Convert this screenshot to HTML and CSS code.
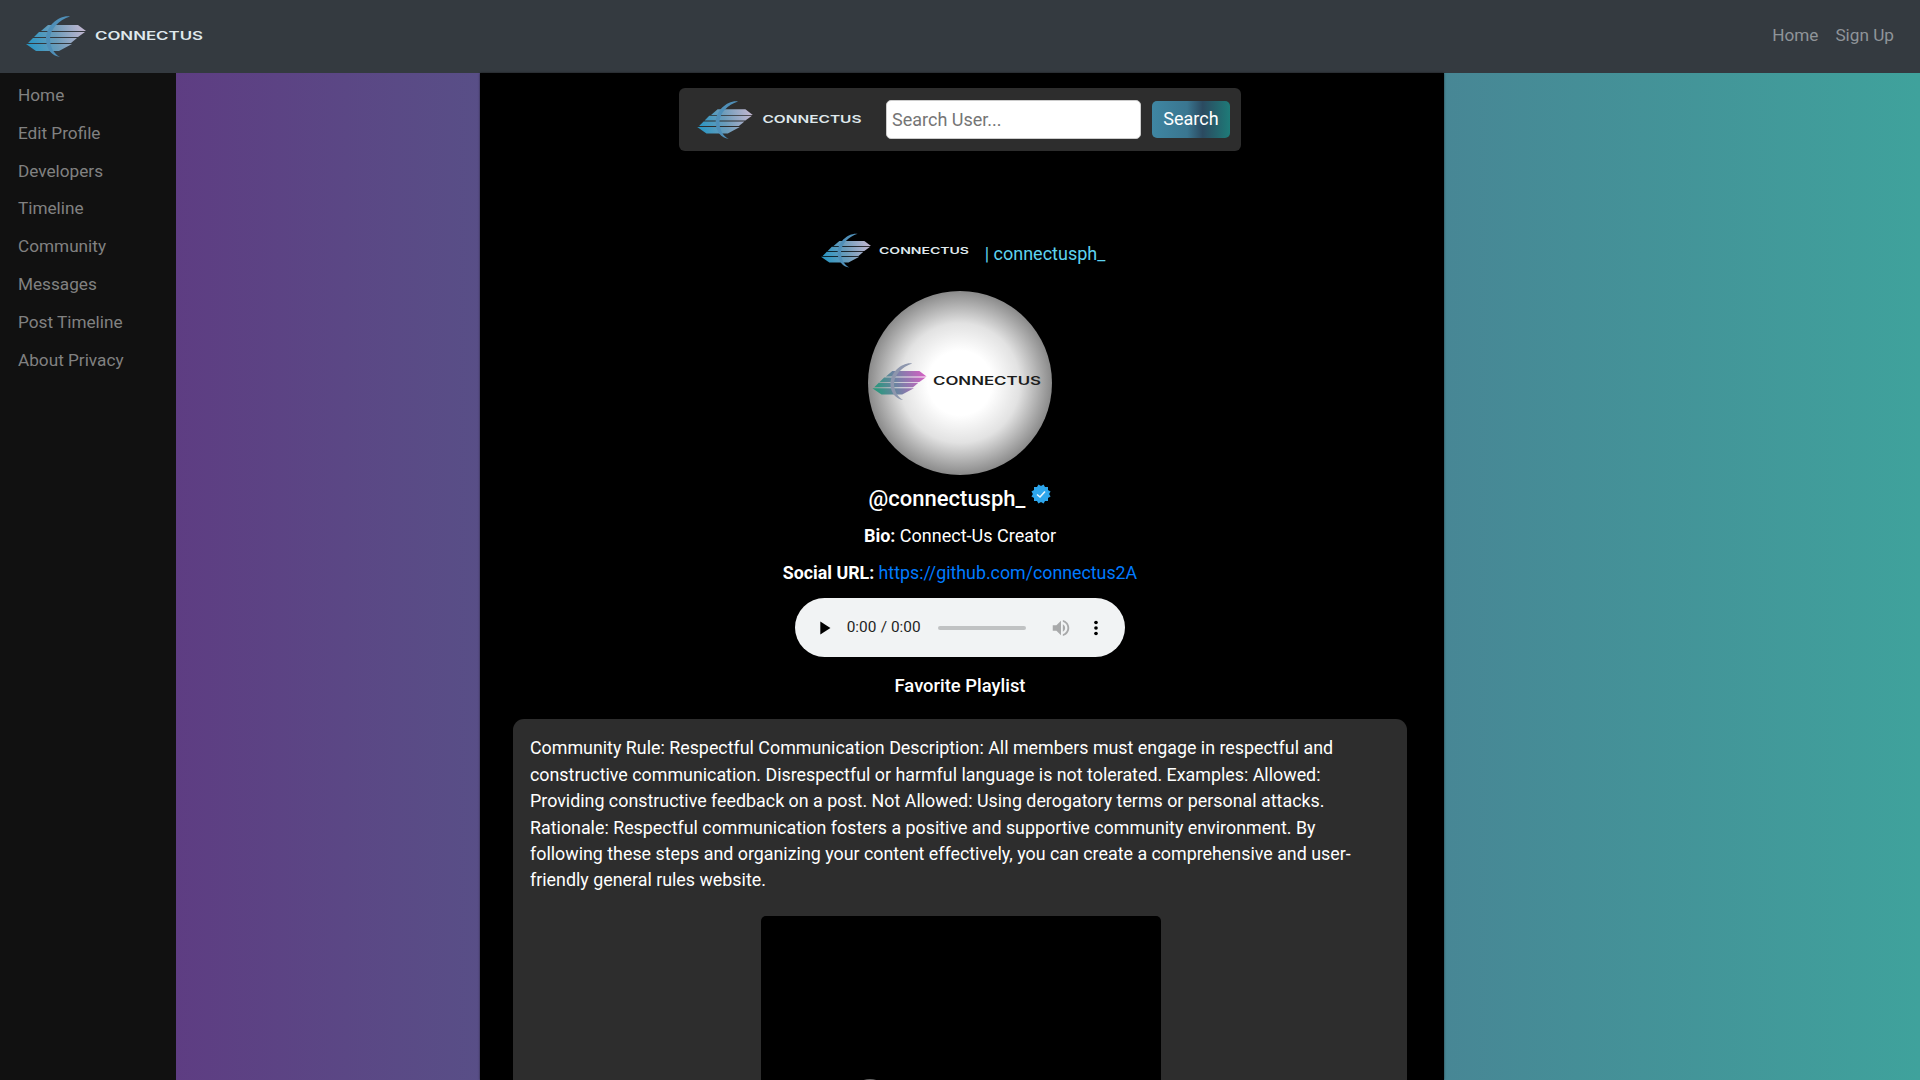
FILE: index.html
```html
<!DOCTYPE html>
<html lang="en">
<head>
  <meta charset="UTF-8" />
  <meta name="viewport" content="width=device-width, initial-scale=1.0"/>
  <title>Connectus - Profile</title>
  <link rel="stylesheet" href="styles.css">
</head>
<body>
  <svg class="defs" width="0" height="0">
    <defs>
      <linearGradient id="blue-fade" gradientUnits="userSpaceOnUse" x1="0" y1="28" x2="60" y2="14">
        <stop offset="0" stop-color="#2596c4"/>
        <stop offset="0.5" stop-color="#6c9cba"/>
        <stop offset="1" stop-color="#c6b8d2"/>
      </linearGradient>
      <linearGradient id="purple-fade" gradientUnits="userSpaceOnUse" x1="0" y1="28" x2="60" y2="14">
        <stop offset="0" stop-color="#1f9a78"/>
        <stop offset="0.5" stop-color="#7a7fa8"/>
        <stop offset="1" stop-color="#d75fc4"/>
      </linearGradient>
      <symbol id="mark" viewBox="0 0 60 41">
        <path d="M22 9H52L60 15H15Z"/>
        <path d="M13 16H59L52 21H8Z"/>
        <path d="M7 22H51L45 27H2Z"/>
        <path d="M0 28H46L33 35H10Z"/>
      </symbol>
      <symbol id="ring" viewBox="0 0 60 41">
        <path d="M44 0.500C33 -1 20 10 20 23C20 33 26 40 34 41C28 38 24 31 24 23C24 13 33 4 44 0.500Z"/>
      </symbol>
    </defs>
  </svg>

  <nav class="topbar">
    <a class="brand" href="#">
      <svg class="mark mark-lg" fill="url(#blue-fade)"><use href="#mark"/><use href="#ring" class="ring"/></svg>
      <svg class="word word-lg" viewBox="0 0 108 12"><text x="0" y="10" textLength="108" lengthAdjust="spacingAndGlyphs">CONNECTUS</text></svg>
    </a>
    <div class="topbar-links">
      <a href="#">Home</a>
      <a href="#">Sign Up</a>
    </div>
  </nav>

  <div class="page">
    <aside class="sidebar">
      <a href="#">Home</a>
      <a href="#">Edit Profile</a>
      <a href="#">Developers</a>
      <a href="#">Timeline</a>
      <a href="#">Community</a>
      <a href="#">Messages</a>
      <a href="#">Post Timeline</a>
      <a href="#">About Privacy</a>
    </aside>

    <main class="content">
      <form class="search-bar">
        <a class="search-logo" href="#">
          <svg class="mark mark-md" fill="url(#blue-fade)"><use href="#mark"/><use href="#ring" class="ring"/></svg>
          <svg class="word word-md" viewBox="0 0 108 12"><text x="0" y="10" textLength="108" lengthAdjust="spacingAndGlyphs">CONNECTUS</text></svg>
        </a>
        <input type="text" placeholder="Search User...">
        <button type="button">Search</button>
      </form>

      <div class="profile-head">
        <svg class="mark mark-sm" fill="url(#blue-fade)"><use href="#mark"/><use href="#ring" class="ring"/></svg>
        <svg class="word word-sm" viewBox="0 0 108 12"><text x="0" y="10" textLength="108" lengthAdjust="spacingAndGlyphs">CONNECTUS</text></svg>
        <span class="handle">| connectusph_</span>
      </div>

      <div class="avatar">
        <svg class="mark mark-av" fill="url(#purple-fade)"><use href="#mark"/><use href="#ring" class="ring-av"/></svg>
        <svg class="word word-av" viewBox="0 0 108 12"><text x="0" y="10" textLength="108" lengthAdjust="spacingAndGlyphs">CONNECTUS</text></svg>
      </div>

      <h2 class="username">@connectusph_
        <svg class="badge" viewBox="0 0 20 20">
          <g fill="#2ea6ec">
            <rect x="3" y="3" width="14" height="14"/>
            <rect x="3" y="3" width="14" height="14" transform="rotate(30 10 10)"/>
            <rect x="3" y="3" width="14" height="14" transform="rotate(60 10 10)"/>
          </g>
          <path d="M6 10.500L9 13L14 7.500" fill="none" stroke="#e8f5fd" stroke-width="1.600"/>
        </svg>
      </h2>
      <p class="info"><b>Bio:</b> Connect-Us Creator</p>
      <p class="info info-url"><b>Social URL:</b> <a href="#">https://github.com/connectus2A</a></p>

      <audio class="player" controls preload="none" src="playlist.mp3"></audio>
      <p class="playlist">Favorite Playlist</p>

      <section class="post">
        <p>Community Rule: Respectful Communication Description: All members must engage in respectful and constructive communication. Disrespectful or harmful language is not tolerated. Examples: Allowed: Providing constructive feedback on a post. Not Allowed: Using derogatory terms or personal attacks. Rationale: Respectful communication fosters a positive and supportive community environment. By following these steps and organizing your content effectively, you can create a comprehensive and user-friendly general rules website.</p>
        <div class="video"></div>
      </section>
    </main>
  </div>
</body>
</html>
```
FILE: styles.css
```css
html, body {
  height: 100%;
}
body {
  margin: 0;
  overflow: hidden;
  font-family: Roboto, "Liberation Sans", sans-serif;
  font-size: 18px;
  line-height: 26.4px;
  color: #fff;
  background: #000;
}
a {
  text-decoration: none;
}
.defs {
  position: absolute;
}

/* top bar */
.topbar {
  height: 73px;
  display: flex;
  align-items: center;
  justify-content: space-between;
  padding: 0 26px;
  background: #343a40;
}
.brand {
  display: flex;
  align-items: center;
  gap: 9px;
}
.topbar-links {
  display: flex;
  gap: 17px;
  margin-top: -2px;
  font-size: 17.2px;
}
.topbar-links a {
  color: #8f9499;
}

/* logo parts */
.mark {
  display: block;
}
.ring {
  fill: #4f8fb8;
}
.ring-av {
  fill: #8d96ad;
}
.word {
  display: block;
  overflow: visible;
  font-family: Inter, sans-serif;
  font-weight: 600;
  font-size: 11.5px;
  fill: #dfe8ec;
}
.mark-lg {
  width: 60px;
  height: 41px;
}
.word-lg {
  width: 108px;
  height: 12px;
  margin-top: -2px;
}
.mark-md {
  width: 56px;
  height: 38px;
}
.word-md {
  width: 100px;
  height: 11px;
}
.mark-sm {
  width: 50px;
  height: 35px;
}
.word-sm {
  width: 90px;
  height: 10px;
}
.mark-av {
  width: 55px;
  height: 37px;
}
.word-av {
  width: 110px;
  height: 12px;
  fill: #1c1c1c;
}

/* layout */
.page {
  display: flex;
  height: calc(100vh - 73px);
  background: linear-gradient(to right, #613380, #3fa29c);
}
.sidebar {
  width: 176px;
  flex-shrink: 0;
  padding-top: 4px;
  background: #111;
  font-size: 17.2px;
}
.sidebar a {
  display: block;
  height: 37.8px;
  line-height: 37px;
  padding-left: 18px;
  color: #818181;
}
.content {
  width: 964px;
  box-sizing: border-box;
  margin-left: 304px;
  padding-right: 4px;
  display: flex;
  flex-direction: column;
  align-items: center;
  background: #000;
  box-shadow: 0 0 2px rgba(0, 0, 0, 0.6);
}
.content > * {
  flex-shrink: 0;
}

/* search */
.search-bar {
  width: 562px;
  height: 63px;
  box-sizing: border-box;
  margin-top: 15px;
  padding: 0 11px 0 18px;
  display: flex;
  align-items: center;
  background: #2d2d2d;
  border-radius: 6px;
}
.search-logo {
  display: flex;
  align-items: center;
  gap: 9px;
  margin-right: 24px;
}
.search-bar input {
  width: 255px;
  height: 39px;
  box-sizing: border-box;
  padding: 0 5px;
  border: 1px solid #ccc;
  border-radius: 5px;
  font: inherit;
  background: #fff;
}
.search-bar input::placeholder {
  color: #757575;
}
.search-bar button {
  width: 78px;
  height: 37px;
  margin-left: 11px;
  border: 0;
  border-radius: 5px;
  font: inherit;
  color: #fff;
  background: linear-gradient(to right, #3f86a2, #3a7690 45%, #2b4a60 65%, #1e7b78);
}

/* profile */
.profile-head {
  margin: 82px 0 0 6px;
  height: 35px;
  display: flex;
  align-items: center;
  gap: 8px;
}
.handle {
  margin-left: 8px;
  padding-top: 7px;
  color: #5fd3ef;
}
.avatar {
  width: 184px;
  height: 184px;
  margin-top: 23px;
  box-sizing: border-box;
  padding: 0 0 4px 4px;
  display: flex;
  align-items: center;
  gap: 5px;
  border-radius: 50%;
  background: radial-gradient(circle closest-side, #fff 35%, #e2e2e2 65%, #8a8a8a 100%);
}
.username {
  margin: 8px 0 0;
  height: 32px;
  font-size: 22px;
  line-height: 32px;
  font-weight: 500;
  display: flex;
  align-items: flex-start;
  gap: 6px;
}
.badge {
  width: 20px;
  height: 20px;
  margin-top: 1px;
}
.info {
  margin: 8px 0 3px;
}
.info-url {
  font-size: 17.8px;
}
.info a {
  color: #007bff;
}
.player {
  display: block;
  zoom: 1.1;
  margin-top: 7px;
}
.playlist {
  margin: 16px 0 0;
  font-size: 18.4px;
  font-weight: 500;
}

/* post card */
.post {
  width: 894px;
  box-sizing: border-box;
  margin-top: 20px;
  padding: 16px 17px;
  background: #2d2d2d;
  border-radius: 11px;
  font-size: 17.85px;
}
.post p {
  margin: 0;
}
.video {
  position: relative;
  width: 400px;
  height: 300px;
  margin: 22px 0 0 231px;
  background: #000;
  border-radius: 5px;
}
/* top of the play button, only its first pixels fit on screen */
.video::after {
  content: "";
  position: absolute;
  top: 163px;
  left: 89px;
  width: 40px;
  height: 40px;
  border-radius: 50%;
  background: #666;
}
```
